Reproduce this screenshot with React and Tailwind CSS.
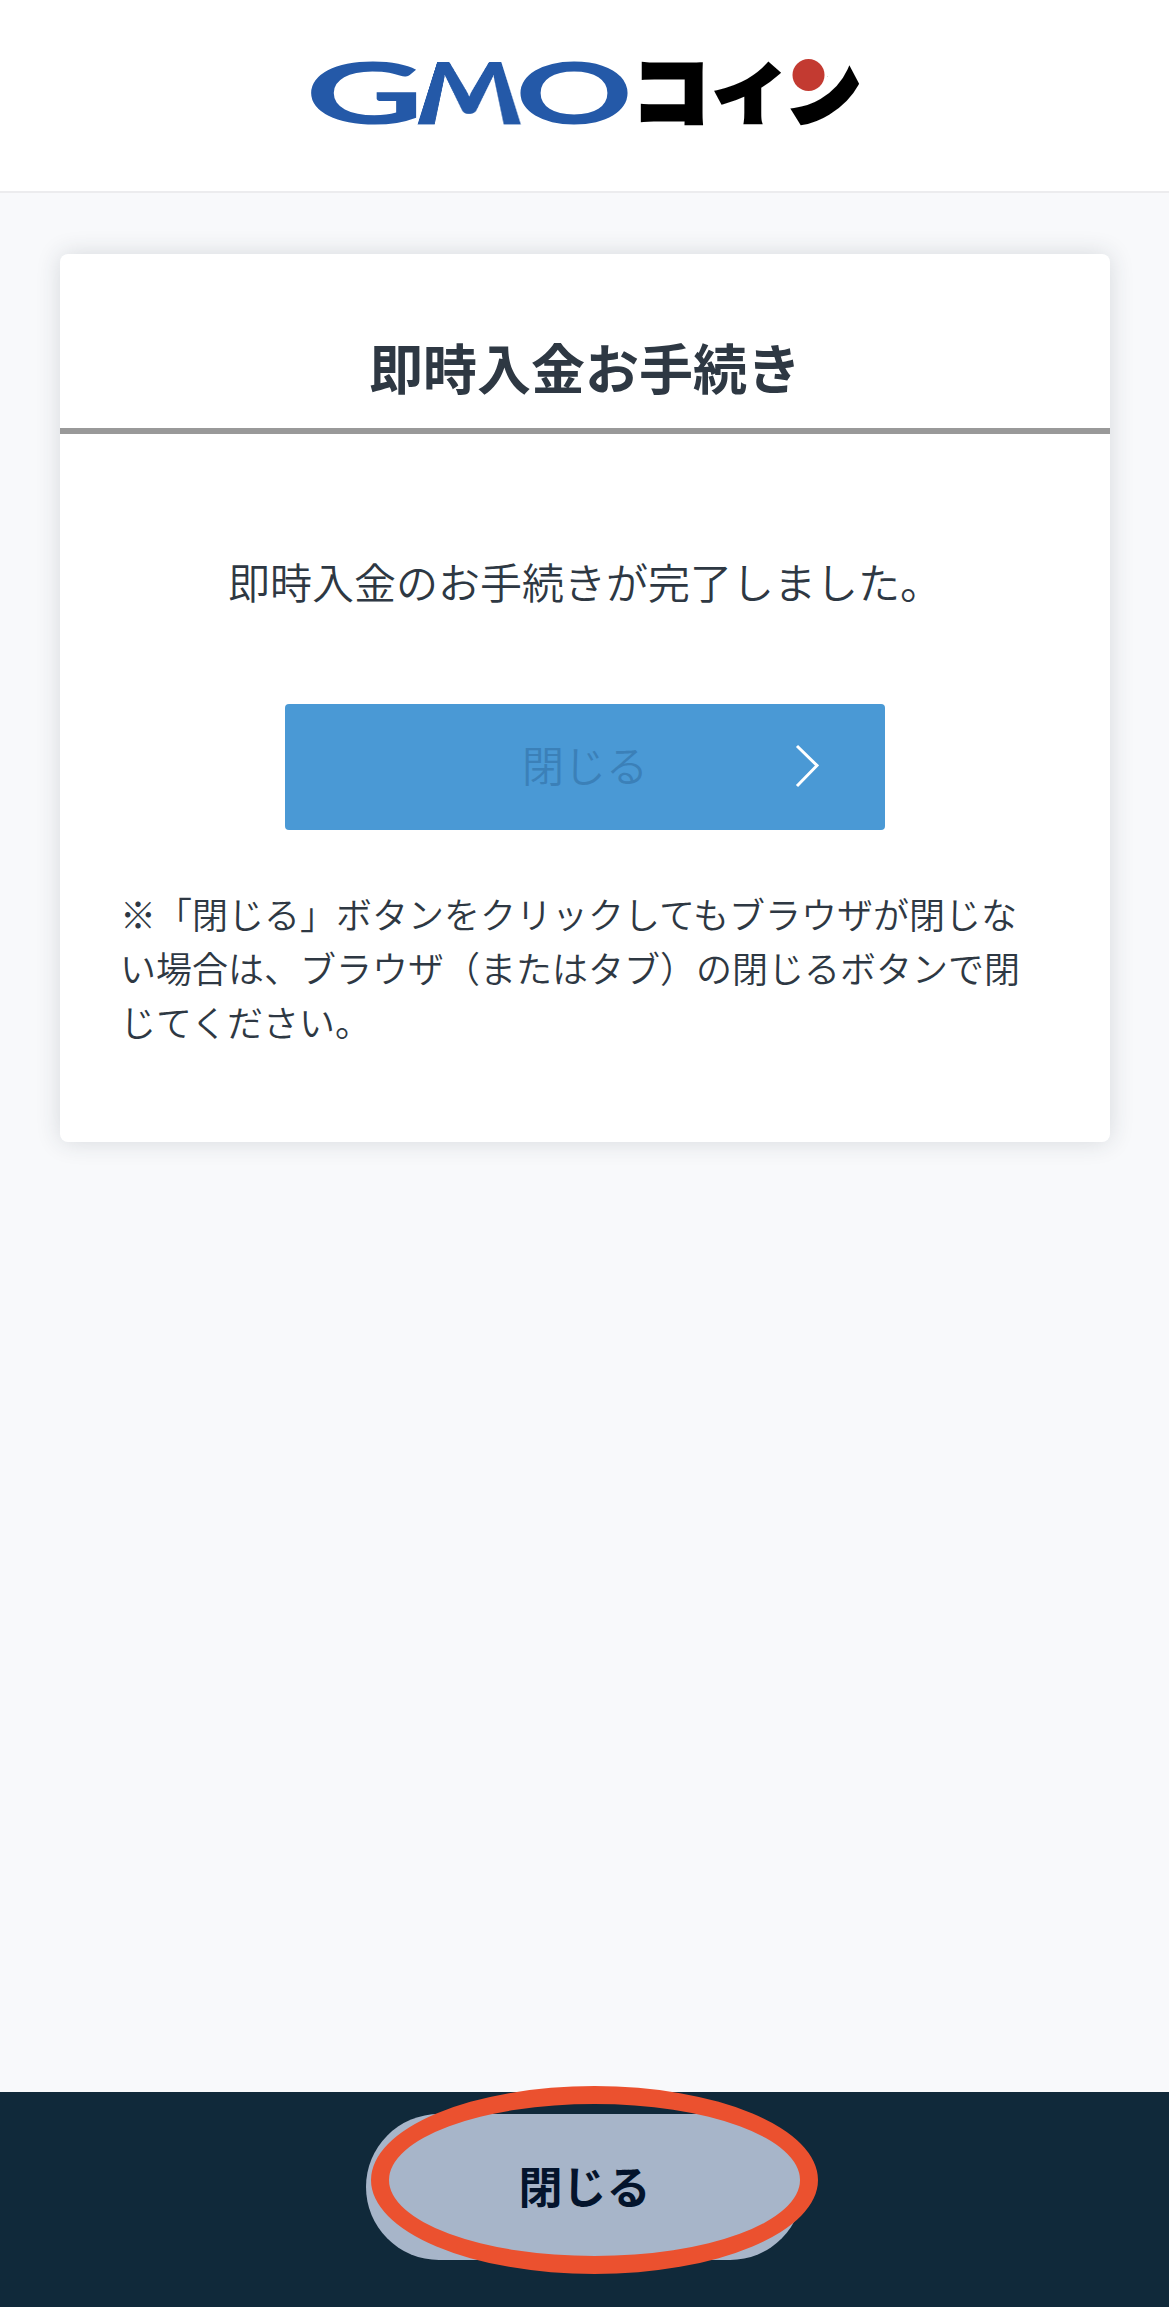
function Logo() {
  return (
    <div className="flex h-[190px] pl-[312px] font-[Lato,sans-serif] text-[#2459a8]" role="img" aria-label="GMOコイン">
      <svg className="h-[190px] w-[106px] overflow-visible" viewBox="0 0 106 190">
        <text transform="translate(-7 124) scale(1.91 1)" fill="currentColor" fontSize="86" fontWeight="700">G</text>
      </svg>
      <div className="flex h-[124px] w-[103px] items-end justify-center">
        <span className="block h-[134px] origin-[50%_114px] text-[158px] leading-[114px] font-black [transform:translateY(17px)_scale(0.8,0.97)_perspective(96px)_rotateX(30deg)]">M</span>
      </div>
      <svg className="h-[190px] w-[107px] overflow-visible" viewBox="0 0 107 190">
        <text transform="translate(-6 124) scale(1.7 1)" fill="currentColor" fontSize="86" fontWeight="700">O</text>
      </svg>
      <svg className="h-[190px] w-[234px] overflow-visible" viewBox="628 0 234 190">
        <defs>
          <clipPath id="n-stem">
            <path d="M-10 30 V-29 H42 V-80 H100 V30Z" />
          </clipPath>
        </defs>
        <g fill="#000" stroke="#000" strokeWidth="5" fontFamily="'Noto Sans CJK JP', sans-serif" fontWeight="900" fontSize="76">
          <text x="633" y="120">コ</text>
          <text transform="translate(714 118) scale(0.93 0.86)">イ</text>
          <text transform="translate(787 119) scale(0.96 1)" clipPath="url(#n-stem)">ン</text>
        </g>
        <circle cx="808.5" cy="75" r="16" fill="#c33a31" />
      </svg>
    </div>
  );
}

export default function App() {
  return (
    <div className="flex h-[2307px] w-[1169px] flex-col overflow-hidden bg-[#f8f9fb] font-['Noto_Sans_CJK_JP',sans-serif] text-[#2e3843]" lang="ja">
      <header className="h-[193px] shrink-0 border-b-2 border-[#ececee] bg-white">
        <Logo />
      </header>

      <main className="flex-1 px-[60px] pt-[61px]">
        <section className="mr-[-1px] flex h-[888px] w-[1050px] flex-col rounded-lg bg-white shadow-[0_0_24px_rgba(40,50,60,0.16)]">
          <h1 className="h-[180px] shrink-0 border-b-[6px] border-[#999999] pt-[73px] text-center text-[54px] leading-[80px] font-bold">
            即時入金お手続き
          </h1>
          <p className="mt-[117px] text-center text-[42px] leading-[60px] font-[350]">即時入金のお手続きが完了しました。</p>
          <button className="mx-auto mt-[93px] flex h-[126px] w-[600px] shrink-0 items-center rounded-[4px] bg-[#4a99d5] pl-[237px] text-[42px] leading-[60px] font-[350] text-[#3b80b8]">
            <span className="pb-[7px]">閉じる</span>
            <svg className="mb-[2px] ml-[147px] h-11 w-6" viewBox="0 0 24 44" fill="none" stroke="white" strokeWidth="3">
              <path d="M2 2 22 21.5 2 42" />
            </svg>
          </button>
          <p className="mt-[56px] pl-[60px] text-[36px] leading-[54px] font-[350] whitespace-nowrap">
            ※「閉じる」ボタンをクリックしてもブラウザが閉じな
            <br />
            い場合は、ブラウザ（またはタブ）の閉じるボタンで閉
            <br />
            じてください。
          </p>
        </section>
      </main>

      <footer className="h-[215px] shrink-0 bg-[#10293a] pt-[22px]">
        <div className="relative mx-auto h-[146px] w-[437px]">
          <button className="size-full rounded-full bg-[#a7b5c9] pb-[4px] text-[44px] leading-none font-bold text-[#04142c]">閉じる</button>
          <div className="absolute top-[-28px] left-[5px] h-[188px] w-[447px] rounded-[50%] border-[18px] border-[#eb512f]" />
        </div>
      </footer>
    </div>
  );
}
